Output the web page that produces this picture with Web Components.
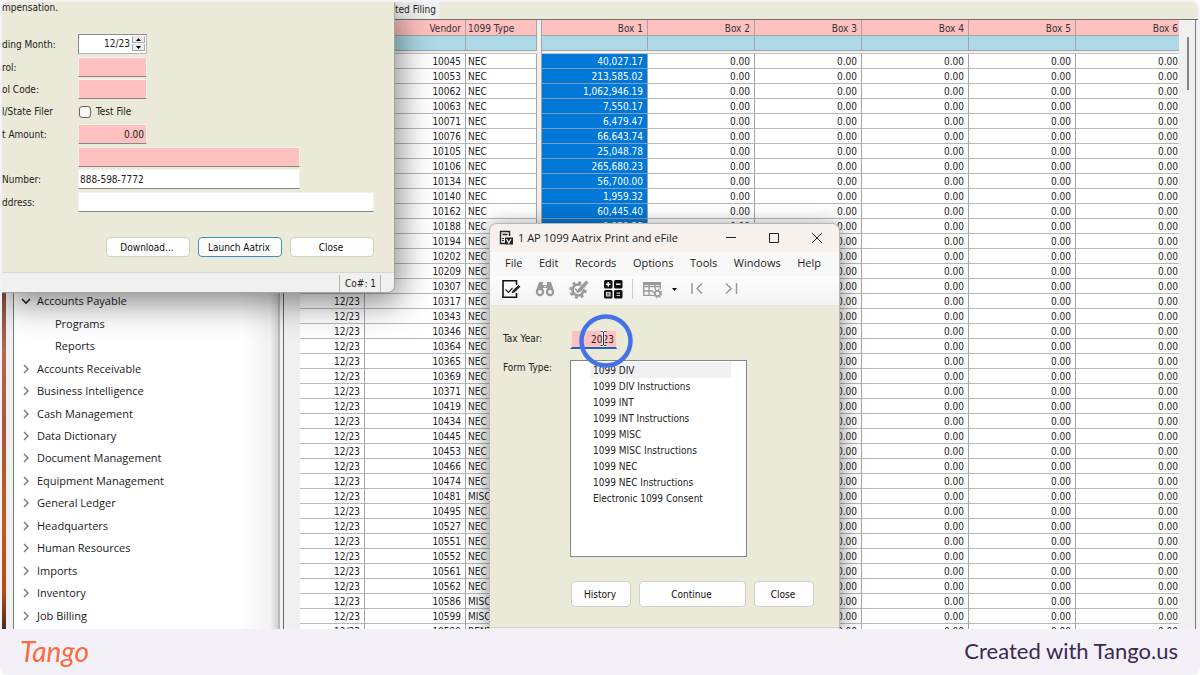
<!DOCTYPE html>
<html lang="en">
<head>
<meta charset="utf-8">
<title>1099 electronic filing</title>
<style>
html { background: #fff; height: 100%; }
body {
  margin: 0; height: 100%;
  font: 10px/14px "DejaVu Sans Condensed", "DejaVu Sans", Tahoma, sans-serif;
  color: #222;
}
</style>
</head>
<body>
<step-card></step-card>

<script>
const define = (name, html, setup) => {
  const template = document.createElement('template');
  template.innerHTML = html;
  customElements.define(name, class extends HTMLElement {
    connectedCallback() {
      if (this.shadowRoot) return;
      const root = this.attachShadow({ mode: 'open' });
      root.append(template.content.cloneNode(true));
      if (setup) setup.call(this, root);
    }
  });
};

/* ---------- push button ---------- */
define('push-button', `
<style>
:host { display: block; }
button {
  width: 100%; height: 100%; padding: 2px 2px 0 0; box-sizing: border-box;
  font: inherit; color: #111; background: #fdfdfd;
  border: 1px solid #d0d0cc; border-radius: 4px;
}
:host([primary]) button { border-color: #3c8fc4; }
</style>
<button type="button"><slot></slot></button>`);

/* ---------- labelled field of the filing window ---------- */
define('form-field', `
<style>
:host { display: grid; grid-template-columns: 76px 1fr; align-items: center; }
label { white-space: nowrap; padding-top: 2px; }
.box { display: flex; position: relative; width: 69px; }
input.text {
  width: 100%; height: 20px; box-sizing: border-box; padding: 0 2px 0 1px;
  font: inherit; color: #222; background: #fff;
  border: 1px solid #f2f1ea; border-bottom-color: #85858a; border-radius: 0; outline: 0;
}
:host([required]) input.text { background: #ffc0c0; }
:host([numeric]) input.text { text-align: right; }
:host([size="medium"]) .box { width: 222px; }
:host([size="large"]) .box { width: 296px; }
:host([spin]) input.text { border-color: #8b8b90 #b5b5b5 #b5b5b5 #8b8b90; padding-right: 16px; padding-bottom: 1px; }
.spin { display: none; position: absolute; right: 2px; top: 2px; width: 13px; flex-direction: column; gap: 1px; }
:host([spin]) .spin { display: flex; }
.spin button {
  height: 7px; padding: 0; border: 1px solid #a8a8a8; border-top-color: #e6e6e6; background: #ececec;
  display: grid; place-items: center;
}
.spin svg { display: block; width: 5px; height: 3px; }
</style>
<label for="f"></label>
<div class="box"><input class="text" id="f" type="text">
  <div class="spin">
    <button type="button" aria-label="Next month"><svg viewBox="0 0 5 3"><path d="M0 3 2.500 0 5 3z"/></svg></button>
    <button type="button" aria-label="Previous month"><svg viewBox="0 0 5 3"><path d="M0 0 2.500 3 5 0z"/></svg></button>
  </div>
</div>`, function (root) {
  root.querySelector('label').textContent = this.getAttribute('label') || '';
  const input = root.querySelector('input');
  input.value = this.getAttribute('value') || '';
  if (!this.getAttribute('label')) input.setAttribute('aria-label', 'Contact name');
});

/* ---------- tick box row ---------- */
define('tick-field', `
<style>
:host { display: grid; grid-template-columns: 77px auto 1fr; align-items: center; }
input {
  appearance: none; width: 12px; height: 12px; margin: 0 5px 0 0; box-sizing: border-box;
  background: #f6f6f6; border: 1px solid #666; border-radius: 3px;
}
</style>
<span><slot></slot></span><input type="checkbox" id="t"><label for="t"></label>`, function (root) {
  root.querySelector('label').textContent = this.getAttribute('label');
});

/* ---------- filing window ---------- */
define('filing-window', `
<style>
:host {
  display: block; width: 392px; background: #ebe9d8; overflow: hidden;
  border-bottom-right-radius: 7px;
  box-shadow: 0 0 1px 1px #a5a5a0, 4px 10px 34px rgba(0,0,0,.5);
}
p { margin: 0; height: 31px; line-height: 12px; }
.fields { display: grid; grid-auto-rows: 1fr; height: 180px; }
.actions { display: flex; justify-content: flex-end; gap: 8px; padding: 24px 20px 15px; }
.actions push-button { width: 84px; height: 20px; }
.status {
  display: flex; justify-content: flex-end; height: 20px; box-sizing: border-box;
  padding: 2px 13px 0 0; background: #f0f0f0; border-top: 1px solid #d8d8d2;
}
.status span { padding: 2px 4px 0 5px; line-height: 13px; border: solid #b4b4b4; border-width: 0 1px; }
</style>
<p>mpensation.</p>
<div class="fields">
  <form-field label="ding Month:" value="12/23" numeric spin></form-field>
  <form-field label="rol:" required></form-field>
  <form-field label="ol Code:" required></form-field>
  <tick-field label="Test File">l/State Filer</tick-field>
  <form-field label="t Amount:" value="0.00" required numeric></form-field>
  <form-field required size="medium"></form-field>
  <form-field label="Number:" value="888-598-7772" size="medium"></form-field>
  <form-field label="ddress:" size="large"></form-field>
</div>
<div class="actions">
  <push-button>Download...</push-button>
  <push-button primary>Launch Aatrix</push-button>
  <push-button>Close</push-button>
</div>
<div class="status"><span>Co#: 1</span></div>`);

/* ---------- module tree ---------- */
define('module-tree', `
<style>
:host {
  display: flex; flex-direction: column; justify-content: flex-end; overflow: hidden;
  background: linear-gradient(90deg, #fff 86%, #f1f1f1 97%, #d4d4d4);
  font: 11px/16px "Open Sans", "Noto Sans", sans-serif; color: #1a1a1a;
}
ul { list-style: none; margin: 0; padding: 0 0 2px 7px; height: 337px; display: grid; grid-auto-rows: 1fr; }
li { display: flex; align-items: center; gap: 6px; }
li.child { padding-left: 34px; }
svg { width: 10px; height: 10px; fill: none; stroke: #777; stroke-width: 1.400; }
svg.open { stroke: #222; stroke-width: 1.600; }
</style>
<ul></ul>`, function (root) {
  const items = ['v Accounts Payable', '- Programs', '- Reports', '> Accounts Receivable',
    '> Business Intelligence', '> Cash Management', '> Data Dictionary', '> Document Management',
    '> Equipment Management', '> General Ledger', '> Headquarters', '> Human Resources',
    '> Imports', '> Inventory', '> Job Billing'];
  root.querySelector('ul').innerHTML = items.map(item => {
    const name = item.slice(2);
    if (item[0] === '-') return `<li class="child">${name}</li>`;
    const open = item[0] === 'v';
    return `<li><svg class="${open ? 'open' : ''}" viewBox="0 0 10 10"><path d="${open ? 'M1 3l4 4 4-4' : 'M3 1l4 4-4 4'}"/></svg><span>${name}</span></li>`;
  }).join('');
});

/* ---------- vendor grid ---------- */
define('vendor-grid', `
<style>
:host { display: flex; overflow: hidden; background: #f0f0f0; }
table { table-layout: fixed; border-spacing: 0; border-collapse: separate; }
.keys { width: 237px; flex: none; }
.pane { flex: 1; min-width: 0; margin-left: 4px; }
.pane table { width: 100%; }
th, td {
  height: 15px; box-sizing: border-box; padding: 1px 3px 0 2px; line-height: 13px;
  border: solid #a4a4a4; border-width: 0 1px 1px 0; overflow: hidden; white-space: nowrap;
}
th { height: 16px; background: #ffc0c0; font-weight: 400; text-align: right; padding-right: 4px; color: #333; }
.filter td { background: #add8e6; }
.gap td { height: 3px; padding: 0; line-height: 2px; background: #f0f0f0; border-width: 0 0 1px; border-color: #c4c4c4; }
tbody td { background: #fff; text-align: right; border-bottom-color: #b8b8b8; padding: 2px 4px 0 2px; line-height: 12px; }
.keys .type { text-align: left; }
.pane tr > :first-child { border-left: 1px solid #a4a4a4; }
.pane tbody td:first-child { background: #0078d7; color: #fff; border-bottom-color: #7f9db8; }
.pane tr > :last-child { border-right: 0; padding-right: 1px; }
.scroll { flex: none; width: 17px; box-sizing: border-box; background: #f0f0f0; padding: 17px 0 0 8px; border-right: 1px solid #777; }
.thumb { width: 2px; height: 53px; background: #858585; }
</style>
<table class="keys">
  <colgroup><col style="width:65px"><col style="width:101px"><col></colgroup>
  <thead><tr><th></th><th>Vendor</th><th class="type">1099 Type</th></tr>
  <tr class="filter"><td></td><td></td><td></td></tr><tr class="gap"><td colspan="3"></td></tr></thead>
  <tbody></tbody>
</table>
<div class="pane"><table class="boxes">
  <colgroup><col style="width:107px"><col style="width:107px"><col style="width:107px"><col style="width:107px"><col style="width:107px"><col></colgroup>
  <thead><tr><th>Box 1</th><th>Box 2</th><th>Box 3</th><th>Box 4</th><th>Box 5</th><th>Box 6</th></tr>
  <tr class="filter"><td></td><td></td><td></td><td></td><td></td><td></td></tr><tr class="gap"><td colspan="6"></td></tr></thead>
  <tbody></tbody>
</table></div>
<div class="scroll"><div class="thumb"></div></div>`, function (root) {
  const vendors = ('10045 10053 10062 10063 10071 10076 10105 10106 10134 10140 10162 10188 10194 10202 ' +
    '10209 10307 10317 10343 10346 10364 10365 10369 10371 10419 10434 10445 10453 10466 10474 10481 ' +
    '10495 10527 10551 10552 10561 10562 10586 10599 10599').split(' ');
  const amounts = ['40,027.17', '213,585.02', '1,062,946.19', '7,550.17', '6,479.47', '66,643.74',
    '25,048.78', '265,680.23', '56,700.00', '1,959.32', '60,445.40', '9,959.33'];
  const types = { 29: 'MISC', 36: 'MISC', 37: 'MISC', 38: 'RENT' };
  root.querySelector('.keys tbody').innerHTML = vendors.map((v, i) =>
    `<tr><td>12/23</td><td>${v}</td><td class="type">${types[i] || 'NEC'}</td></tr>`).join('');
  root.querySelector('.boxes tbody').innerHTML = vendors.map((v, i) =>
    `<tr><td>${amounts[i] || ''}</td>${'<td>0.00</td>'.repeat(5)}</tr>`).join('');
});

/* ---------- toolbar icons ---------- */
const icons = {
  edit: '<path d="M15.500 6V1.700H2v16.600h13.500V14" fill="none" stroke="#111" stroke-width="1.600"/><path d="M4.500 10.500l3 3 4-4.500" fill="none" stroke="#222" stroke-width="1.200"/><path d="M10 15l1.200-3.600L17.500 5.500l2.300 2.300-6.200 6z" fill="#222" stroke="#fafafa" stroke-width=".9"/>',
  find: '<g fill="#999"><path d="M4 3h4v3h4V3h4l3 9v1h-7V9H8v4H1v-1z"/><circle cx="5" cy="13" r="4.200"/><circle cx="15" cy="13" r="4.200"/></g><g fill="#f5f5f5"><circle cx="5" cy="13" r="2"/><circle cx="15" cy="13" r="2"/><path d="M9 7h2v1H9z"/></g>',
  gear: '<circle cx="9" cy="11" r="5.500" fill="none" stroke="#999" stroke-width="2.600"/><circle cx="9" cy="11" r="7.500" fill="none" stroke="#999" stroke-width="2.500" stroke-dasharray="3 2.890"/><path d="M8.500 13L19 2" fill="none" stroke="#f7f7f7" stroke-width="4.600"/><path d="M6 9.500l3 3.500" fill="none" stroke="#999" stroke-width="1.600"/><path d="M7.500 14.500l1.200-4L17 1.500l2.500 2.200-8 9z" fill="#999"/>',
  calc: '<g fill="#111"><rect x="1" y="1" width="8.500" height="8.500" rx="1.500"/><rect x="11" y="1" width="8.500" height="8.500" rx="1.500"/><rect x="1" y="11" width="8.500" height="8.500" rx="1.500"/><rect x="11" y="11" width="8.500" height="8.500" rx="1.500"/></g><path d="M3 5.200h4.500M5.200 3v4.500M13 5.200h4.500" stroke="#fff" stroke-width="1.400"/><path d="M3.500 13.500h3.500v3.500H3.500zM13.500 14.200h3.500M13.500 16.500h3.500" stroke="#ccc" stroke-width="1.200" fill="#777"/>',
  sheet: '<path d="M1 3h18v3H1z" fill="#999"/><path d="M1.700 3v13.300H11M1 7.500h18M1 12h10M7 6v10M13 6v4M18.300 3v7" fill="none" stroke="#999" stroke-width="1.300"/><circle cx="15.500" cy="14.500" r="2.700" fill="none" stroke="#999" stroke-width="1.700"/><circle cx="15.500" cy="14.500" r="4.200" fill="none" stroke="#999" stroke-width="1.200" stroke-dasharray="1.650 1.650"/>',
  first: '<path d="M5 4v11M15 4.500L10 9.500l5 5" fill="none" stroke="#999" stroke-width="1.500"/>',
  last: '<path d="M15.500 4v11M5 4.500l5 5-5 5" fill="none" stroke="#999" stroke-width="1.500"/>'
};
define('tool-button', `
<style>
:host { display: block; width: 20px; height: 20px; }
button { display: block; width: 100%; height: 100%; padding: 0; border: 0; background: none; }
svg { display: block; width: 20px; height: 20px; }
</style>
<button type="button"><svg viewBox="0 0 20 20"></svg></button>`, function (root) {
  root.querySelector('svg').innerHTML = icons[this.getAttribute('icon')];
  root.querySelector('button').setAttribute('aria-label', this.getAttribute('name'));
});

/* ---------- print dialog ---------- */
define('print-dialog', `
<style>
:host {
  display: flex; flex-direction: column; width: 349px; background: #ebe9d8;
  border-radius: 7px 7px 0 0; overflow: hidden;
  box-shadow: 0 0 0 1px #bbb8b4, 0 4px 22px rgba(0,0,0,.55);
}
header, nav { font-family: "Open Sans", "Noto Sans", sans-serif; font-size: 11px; line-height: 16px; color: #1c1c1c; }
header { display: flex; align-items: center; height: 28px; background: #f6f1ec; padding-left: 9px; }
header > svg { width: 14px; height: 16px; margin-right: 5px; }
h1 { flex: 1; margin: 0; font: inherit; }
header button { width: 43px; height: 28px; padding: 0 1px 0 0; border: 0; background: none; display: grid; place-items: center; }
header button svg { width: 12px; height: 12px; fill: none; stroke: #222; stroke-width: 1; }
nav { display: flex; justify-content: space-between; align-items: center; height: 24px; box-sizing: border-box; padding: 0 18px 2px 15px; background: #f8f8f8; }
nav a { color: inherit; text-decoration: none; }
.tools { display: flex; align-items: center; gap: 14px; height: 29px; box-sizing: border-box; padding: 0 0 3px 11px; background: linear-gradient(#fdfdfd, #f3f3f3); }
.sep { width: 1px; height: 20px; background: #ccc; margin: 0 -5px; }
.more { width: 5px; height: 3px; margin: 0 -4px; }
.content { position: relative; padding: 25px 24px 20px 13px; display: grid; grid-template-columns: 67px 1fr; }
.content > label { padding-top: 1px; }
.year {
  width: 47px; height: 19px; margin-bottom: 11px; box-sizing: border-box; padding: 0 2px 0 0; text-align: right;
  font: inherit; color: #222; background: #ffc0c0; outline: 0; border-radius: 0;
  border: solid #f2e4dc; border-width: 1px 1px 2px 2px; border-bottom-color: #1a66b8;
}
.content > .yearlabel { padding-top: 2px; }
select {
  width: 177px; height: 197px; box-sizing: border-box; margin: 0; padding: 1px 15px 0 20px; overflow: hidden;
  background: #fff; border: 1px solid #84868c; border-radius: 0; outline: 0; font: inherit; color: #222;
}
option { height: 16px; min-height: 16px; box-sizing: border-box; padding: 3px 2px 0; }
option:first-child { background: #f0f0f0; }
.actions { grid-column: 2; display: flex; gap: 8px; padding-top: 24px; padding-left: 1px; }
.actions push-button { width: 60px; height: 26px; }
.actions .wide { width: 107px; }
.pointer { position: absolute; left: 89px; top: 9px; width: 54px; height: 54px; pointer-events: none; }
footer { flex: 1; background: #f0f0f0; border-top: 1px solid #d0d0cc; min-height: 1px; }
</style>
<header>
  <svg viewBox="0 0 14 16"><path d="M6 13.500H1.500v-12h9V6M3.500 4.500h5" fill="none" stroke="#222" stroke-width="1.400"/><path d="M3 8.500h2M3 10.500h2" stroke="#222"/><path d="M6 7.500h8v7H6z" fill="#222"/><path d="M7.500 9l2.300 4L12 9" fill="none" stroke="#fff" stroke-width="1.200"/></svg>
  <h1>1 AP 1099 Aatrix Print and eFile</h1>
  <button type="button" aria-label="Minimize"><svg viewBox="0 0 12 12"><path d="M1 5.500h10"/></svg></button>
  <button type="button" aria-label="Maximize"><svg viewBox="0 0 12 12"><path d="M1.500 1.500h9v9h-9z"/></svg></button>
  <button type="button" aria-label="Close"><svg viewBox="0 0 12 12"><path d="M1 1l10 10M11 1L1 11"/></svg></button>
</header>
<nav><a href="#">File</a><a href="#">Edit</a><a href="#">Records</a><a href="#">Options</a><a href="#">Tools</a><a href="#">Windows</a><a href="#">Help</a></nav>
<div class="tools">
  <tool-button icon="edit" name="Process"></tool-button>
  <tool-button icon="find" name="Find"></tool-button>
  <tool-button icon="gear" name="Setup"></tool-button>
  <tool-button icon="calc" name="Calculator"></tool-button>
  <span class="sep"></span>
  <tool-button icon="sheet" name="Grid options"></tool-button>
  <svg class="more" viewBox="0 0 5 3"><path d="M0 0h5L2.500 3z"/></svg>
  <tool-button icon="first" name="First"></tool-button>
  <tool-button icon="last" name="Last"></tool-button>
</div>
<div class="content">
  <label class="yearlabel" for="year">Tax Year:</label>
  <input class="year" id="year" type="text" value="2023">
  <label for="forms">Form Type:</label>
  <select id="forms" size="12">
    <option>1099 DIV</option><option>1099 DIV Instructions</option><option>1099 INT</option>
    <option>1099 INT Instructions</option><option>1099 MISC</option><option>1099 MISC Instructions</option>
    <option>1099 NEC</option><option>1099 NEC Instructions</option><option>Electronic 1099 Consent</option>
  </select>
  <div class="actions"><push-button>History</push-button><push-button class="wide">Continue</push-button><push-button>Close</push-button></div>
  <svg class="pointer" viewBox="0 0 54 54"><circle cx="27" cy="27" r="24.500" fill="none" stroke="#4472e8" stroke-width="4.500"/><path d="M21.500 17.500h2l1 1 1-1h2M24.500 18v13M21.500 31.500h2l1-1 1 1h2" fill="none" stroke="#fff" stroke-width="2.400"/><path d="M21.500 17.500h2l1 1 1-1h2M24.500 18v13M21.500 31.500h2l1-1 1 1h2" fill="none" stroke="#333" stroke-width="1"/></svg>
</div>
<footer></footer>`);

/* ---------- desktop ---------- */
define('desktop-view', `
<style>
:host {
  position: relative; display: grid; grid-template-columns: 4px 274px 6px 1fr; overflow: hidden;
  border-radius: 8px 8px 0 0; background: #f0f0f0;
}
.wall { background: linear-gradient(#7a4336 0 290px, #8d5142 300px, #b06a4c 350px, #a65a38 420px, #c05a1d 520px, #b44d14 590px, #4c2a1f); }
.side { display: grid; padding-left: 7px; border-right: 2px solid #b9b9b9; background: #f0f0f0; min-height: 0; }
module-tree { border-left: 1px solid #6c7d83; min-height: 0; }
.divider { background: #f0f0f0; box-sizing: border-box; margin-right: 2px; border-right: 1px solid #666; }
.main { display: flex; flex-direction: column; min-width: 0; min-height: 0; margin-right: 2px; }
.tabs { display: flex; height: 17px; padding-left: 109px; background: #ebe9d8; border-bottom: 1px solid #6f6f6f; margin-right: -2px; }
.tabs span { background: #f0f0f0; padding: 1px 3px 0 0; }
vendor-grid { flex: 1; min-height: 0; padding-left: 14px; }
filing-window { position: absolute; left: 0; top: 0; }
print-dialog { position: absolute; left: 488px; top: 222px; bottom: 0; }
</style>
<div class="wall"></div>
<div class="side"><module-tree></module-tree></div>
<div class="divider"></div>
<div class="main"><div class="tabs"><span>ted Filing</span></div><vendor-grid></vendor-grid></div>
<filing-window></filing-window>
<print-dialog></print-dialog>`);

/* ---------- card ---------- */
define('step-card', `
<style>
:host {
  display: flex; flex-direction: column; height: 100%; box-sizing: border-box; padding: 2px 2px 0;
  background: #f3f1f7; border-radius: 8px; overflow: hidden;
}
desktop-view { flex: 1; min-height: 0; }
footer { flex: none; display: flex; align-items: center; justify-content: space-between; height: 46px; box-sizing: border-box; padding: 0 20px 2px 18px; }
a { font: italic 28px/32px Lato, sans-serif; color: #fb6b3b; text-decoration: none; }
span { font: 22px/28px Lato, sans-serif; color: #3b2a52; }
</style>
<desktop-view></desktop-view>
<footer><a href="#">Tango</a><span>Created with Tango.us</span></footer>`);
</script>
</body>
</html>
